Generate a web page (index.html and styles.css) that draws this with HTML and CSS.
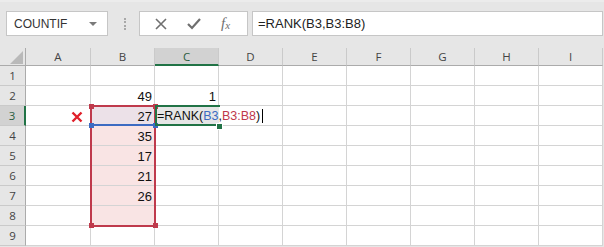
FILE: index.html
```html
<!DOCTYPE html>
<html>
<head>
<meta charset="utf-8">
<link rel="stylesheet" href="styles.css">
</head>
<body>
<div class="app">
  <div class="toolbar">
    <div class="namebox"><span>COUNTIF</span><span class="drop"></span></div>
    <div class="grip"></div>
    <div class="buttons">
      <svg class="ic" width="14" height="14" viewBox="0 0 14 14"><path d="M2 2 L12 12 M12 2 L2 12" stroke="#6f6f6f" stroke-width="1.6" fill="none"/></svg>
      <svg class="ic" width="16" height="14" viewBox="0 0 16 14"><path d="M2 7 L6 11 L14 2" stroke="#6f6f6f" stroke-width="2.2" fill="none"/></svg>
      <span class="fx">f<sub>x</sub></span>
    </div>
    <div class="formula">=RANK(B3,B3:B8)</div>
  </div>
  <div class="sheet">
    <div class="corner"><svg width="26" height="18" viewBox="0 0 26 18"><polygon points="23,3 23,16 10,16" fill="#b9b9b9"/></svg></div>
    <div class="ch">A</div><div class="ch">B</div><div class="ch sel">C</div><div class="ch">D</div><div class="ch">E</div><div class="ch">F</div><div class="ch">G</div><div class="ch">H</div><div class="ch">I</div>

    <div class="rh">1</div><div class="c"></div><div class="c"></div><div class="c"></div><div class="c"></div><div class="c"></div><div class="c"></div><div class="c"></div><div class="c"></div><div class="c"></div>
    <div class="rh">2</div><div class="c"></div><div class="c n">49</div><div class="c n">1</div><div class="c"></div><div class="c"></div><div class="c"></div><div class="c"></div><div class="c"></div><div class="c"></div>
    <div class="rh sel">3</div><div class="c"></div><div class="c n both">27</div><div class="c edit">=RANK(<span class="blue">B3</span>,<span class="red">B3:B8</span>)<span class="caret"></span></div><div class="c"></div><div class="c"></div><div class="c"></div><div class="c"></div><div class="c"></div><div class="c"></div>
    <div class="rh">4</div><div class="c"></div><div class="c n pink">35</div><div class="c"></div><div class="c"></div><div class="c"></div><div class="c"></div><div class="c"></div><div class="c"></div><div class="c"></div>
    <div class="rh">5</div><div class="c"></div><div class="c n pink">17</div><div class="c"></div><div class="c"></div><div class="c"></div><div class="c"></div><div class="c"></div><div class="c"></div><div class="c"></div>
    <div class="rh">6</div><div class="c"></div><div class="c n pink">21</div><div class="c"></div><div class="c"></div><div class="c"></div><div class="c"></div><div class="c"></div><div class="c"></div><div class="c"></div>
    <div class="rh">7</div><div class="c"></div><div class="c n pink">26</div><div class="c"></div><div class="c"></div><div class="c"></div><div class="c"></div><div class="c"></div><div class="c"></div><div class="c"></div>
    <div class="rh">8</div><div class="c"></div><div class="c n pink"></div><div class="c"></div><div class="c"></div><div class="c"></div><div class="c"></div><div class="c"></div><div class="c"></div><div class="c"></div>
    <div class="rh">9</div><div class="c"></div><div class="c"></div><div class="c"></div><div class="c"></div><div class="c"></div><div class="c"></div><div class="c"></div><div class="c"></div><div class="c"></div>

    <svg class="xmark" width="12" height="12" viewBox="0 0 12 12"><path d="M1.5 1.5 L10.5 10.5 M10.5 1.5 L1.5 10.5" stroke="#e0202a" stroke-width="2.4" fill="none"/></svg>
    <div class="range-red"></div>
    <div class="range-blue"></div>
    <div class="sq red-sq tl"></div><div class="sq red-sq tr"></div><div class="sq red-sq bl"></div><div class="sq red-sq br"></div>
    <div class="sq blue-sq b3l"></div><div class="sq blue-sq b3r"></div>
    <div class="active"></div>
    <div class="handle"></div>
  </div>
</div>
</body>
</html>
```
FILE: styles.css
```css
* { box-sizing: border-box; }
html, body { margin: 0; padding: 0; }
body { width: 604px; height: 247px; background: #e6e6e6; overflow: hidden; font-family: "Liberation Sans", Arial, sans-serif; }
.app { width: 604px; height: 247px; }
.toolbar { height: 48px; display: flex; align-items: flex-start; border-top: 2px solid #ececec; padding-top: 9px; }
.namebox { margin-left: 6px; width: 102px; height: 25px; background: #fff; border: 1px solid #c6c6c6; display: flex; align-items: center; justify-content: space-between; padding: 0 7px 0 7px; font-size: 12px; color: #333; }
.drop { width: 0; height: 0; border-left: 4px solid transparent; border-right: 4px solid transparent; border-top: 4px solid #7a7a7a; margin-right: 3px; }
.grip { width: 2px; height: 12px; margin: 7px 13px 0 16px; border-left: 2px dotted #a8a8a8; }
.buttons { width: 109px; height: 25px; background: #fff; border: 1px solid #c6c6c6; display: flex; align-items: center; padding-left: 14px; }
.buttons .ic:nth-child(1) { margin-right: 18px; }
.buttons .ic:nth-child(2) { margin-right: 19px; }
.fx { font-family: "Liberation Serif", serif; font-style: italic; font-size: 15px; color: #6f6f6f; line-height: 1; }
.fx sub { font-size: 11px; vertical-align: -1px; }
.formula { margin-left: 4px; width: 351px; height: 25px; background: #fff; border: 1px solid #c6c6c6; font-size: 13px; color: #222; padding-left: 5px; line-height: 23px; }
.sheet { position: relative; display: grid; grid-template-columns: 26px 65px repeat(8, 64px); grid-template-rows: 18px repeat(9, 20px); width: 603px; }
.corner { border-right: 1px solid #ababab; border-bottom: 1px solid #ababab; }
.corner svg { display: block; }
.ch { border-right: 1px solid #cacaca; border-bottom: 1px solid #ababab; font-family: "Open Sans", sans-serif; font-size: 11.5px; color: #444; text-align: center; line-height: 18px; }
.ch.sel { background: #d2d2d2; border-bottom: 2px solid #217346; color: #2b5d3f; }
.rh { border-right: 1px solid #ababab; border-bottom: 1px solid #cacaca; font-family: "Open Sans", sans-serif; font-size: 11.5px; color: #444; text-align: center; line-height: 20px; }
.rh.sel { background: #d2d2d2; border-right: 2px solid #217346; color: #2b5d3f; }
.c { background: #fff; border-right: 1px solid #d4d4d4; border-bottom: 1px solid #d4d4d4; font-size: 12.5px; color: #111; line-height: 21px; white-space: nowrap; }
.c.n { text-align: right; padding-right: 2px; font-size: 13px; }
.c.pink { background: #f9e4e4; }
.c.both { background: #ece1e8; }
.c.edit { border-right-color: transparent; padding-left: 2px; position: relative; z-index: 1; background: transparent; overflow: visible; }
.blue { color: #3c6bc2; }
.red { color: #c0394b; }
.caret { display: inline-block; width: 1px; height: 14px; background: #000; vertical-align: -3px; margin-left: 2px; }
.xmark { position: absolute; left: 71px; top: 63px; }
.range-red { position: absolute; left: 90px; top: 57px; width: 66px; height: 122px; border: 2px solid #bf3a4c; }
.range-blue { position: absolute; left: 92px; top: 76px; width: 62px; height: 2px; background: #3c6bc2; }
.sq { position: absolute; width: 5px; height: 5px; }
.red-sq { background: #bf3a4c; }
.blue-sq { background: #3c6bc2; }
.tl { left: 89px; top: 56px; }
.tr { left: 153px; top: 56px; }
.bl { left: 89px; top: 175px; }
.br { left: 153px; top: 175px; }
.b3l { left: 89px; top: 75px; }
.b3r { left: 153px; top: 75px; }
.active { position: absolute; left: 155px; top: 57px; width: 65px; height: 21px; border: 2px solid #217346; border-right: none; z-index: 2; }
.handle { position: absolute; left: 216px; top: 75px; width: 5px; height: 5px; background: #217346; border: 1px solid #fff; box-sizing: content-box; z-index: 3; }
```
